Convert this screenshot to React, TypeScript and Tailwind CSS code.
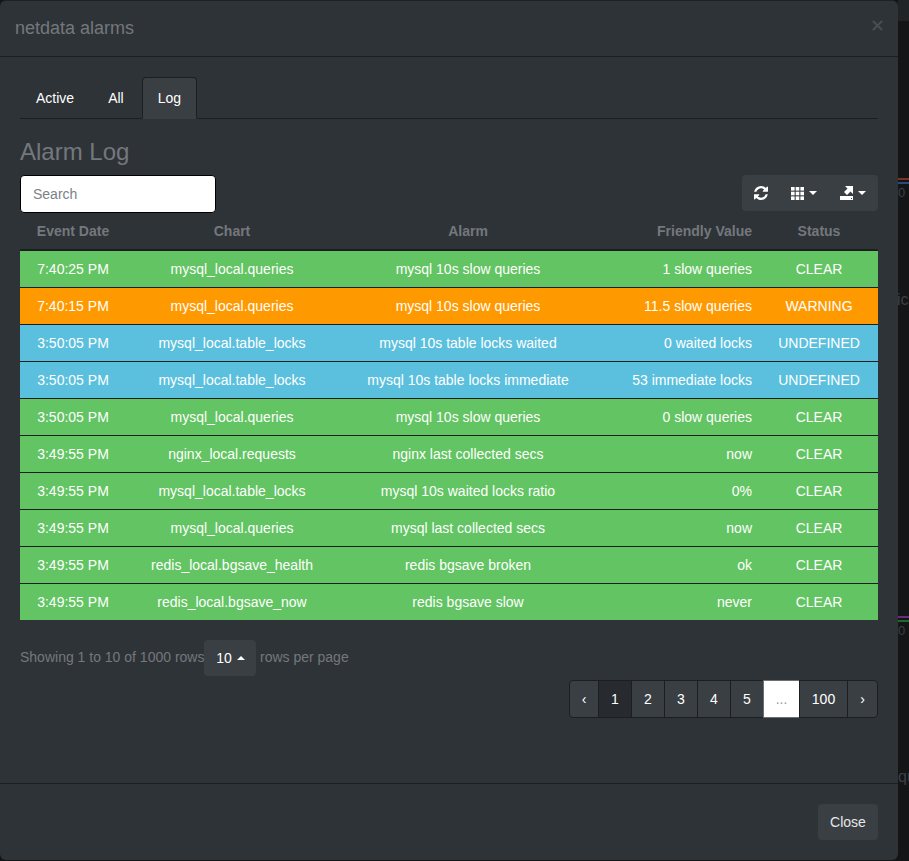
import React from 'react';

type Row = { date: string; chart: string; alarm: string; value: string; status: string };

const rows: Row[] = [
  { date: '7:40:25 PM', chart: 'mysql_local.queries', alarm: 'mysql 10s slow queries', value: '1 slow queries', status: 'CLEAR' },
  { date: '7:40:15 PM', chart: 'mysql_local.queries', alarm: 'mysql 10s slow queries', value: '11.5 slow queries', status: 'WARNING' },
  { date: '3:50:05 PM', chart: 'mysql_local.table_locks', alarm: 'mysql 10s table locks waited', value: '0 waited locks', status: 'UNDEFINED' },
  { date: '3:50:05 PM', chart: 'mysql_local.table_locks', alarm: 'mysql 10s table locks immediate', value: '53 immediate locks', status: 'UNDEFINED' },
  { date: '3:50:05 PM', chart: 'mysql_local.queries', alarm: 'mysql 10s slow queries', value: '0 slow queries', status: 'CLEAR' },
  { date: '3:49:55 PM', chart: 'nginx_local.requests', alarm: 'nginx last collected secs', value: 'now', status: 'CLEAR' },
  { date: '3:49:55 PM', chart: 'mysql_local.table_locks', alarm: 'mysql 10s waited locks ratio', value: '0%', status: 'CLEAR' },
  { date: '3:49:55 PM', chart: 'mysql_local.queries', alarm: 'mysql last collected secs', value: 'now', status: 'CLEAR' },
  { date: '3:49:55 PM', chart: 'redis_local.bgsave_health', alarm: 'redis bgsave broken', value: 'ok', status: 'CLEAR' },
  { date: '3:49:55 PM', chart: 'redis_local.bgsave_now', alarm: 'redis bgsave slow', value: 'never', status: 'CLEAR' },
];

const rowColor = (status: string) => {
  if (status === 'WARNING') return 'bg-[#ff9900]';
  if (status === 'UNDEFINED') return 'bg-[#5bc0de]';
  return 'bg-[#62c462]';
};

const Caret: React.FC<{ up?: boolean }> = ({ up }) => (
  <span
    className={`inline-block w-0 h-0 border-x-4 border-x-transparent ${up ? 'border-b-4 border-b-white' : 'border-t-4 border-t-white'}`}
  />
);

const RefreshIcon = () => (
  <svg width="14" height="14" viewBox="0 0 1536 1536" fill="white">
    <path d="M1511 928q0 5-1 7-64 268-268 434.500t-478 166.500q-146 0-282.500-55t-243.500-157l-129 129q-19 19-45 19t-45-19-19-45v-448q0-26 19-45t45-19h448q26 0 45 19t19 45-19 45l-137 137q71 66 161 102t187 36q134 0 250-65t186-179q11-17 53-117 8-23 30-23h192q13 0 22.500 9.500t9.500 22.500zM1536 128v448q0 26-19 45t-45 19h-448q-26 0-45-19t-19-45 19-45l138-138q-148-137-349-137-134 0-250 65t-186 179q-11 17-53 117-8 23-30 23h-199q-13 0-22.500-9.500t-9.500-22.500v-7q65-268 270-434.500t480-166.500q146 0 284 55.500t245 156.500l130-129q19-19 45-19t45 19 19 45z" />
  </svg>
);

const GridIcon = () => (
  <svg width="13" height="13" viewBox="0 0 13 13" fill="white">
    {[0, 4.7, 9.4].map((x) =>
      [0, 4.7, 9.4].map((y) => <rect key={`${x}-${y}`} x={x} y={y} width="3.6" height="3.6" />),
    )}
  </svg>
);

const ExportIcon = () => (
  <svg width="13" height="14" viewBox="0 0 13 14" fill="white">
    <rect x="0" y="10" width="13" height="4" />
    <path d="M5 0H13V8L10.500 5.500 7 9 4 6 7.500 2.500z" />
    <rect x="11" y="12" width="1" height="1" fill="#3a3f44" />
  </svg>
);

const PageItem: React.FC<{ label: string; className: string }> = ({ label, className }) => (
  <span className={`h-[38px] flex items-center justify-center border border-[#1c1e22] -ml-px first:ml-0 ${className}`}>
    {label}
  </span>
);

const cell = 'px-2 align-middle font-normal';

// bits of the dashboard behind the modal, visible in the strip to its right
const Backdrop = () => (
  <div className="absolute inset-y-0 right-0 w-[11px] overflow-hidden text-[#3d4044] text-[16px] leading-[20px]">
    <div className="absolute top-0 inset-x-0 h-[21px] bg-[#212427]" />
    <div className="absolute top-[178px] inset-x-0 h-[2px] bg-[#7a3320]" />
    <div className="absolute top-[182px] inset-x-0 h-[2px] bg-[#2d4a80]" />
    <span className="absolute top-[183px] left-0 text-[13px]">0</span>
    <span className="absolute top-[290px] -left-px">ic</span>
    <div className="absolute top-[616px] inset-x-0 h-[2px] bg-[#6a2a80]" />
    <div className="absolute top-[620px] inset-x-0 h-[2px] bg-[#1f6a2a]" />
    <span className="absolute top-[621px] left-0 text-[13px]">0</span>
    <span className="absolute top-[767px] left-0">qu</span>
  </div>
);

export default function App() {
  return (
    <div
      className="relative h-[861px] w-[909px] overflow-hidden bg-[#131517] text-white text-[14px] leading-[20px]"
      style={{ fontFamily: '"Liberation Sans", Arial, sans-serif' }}
    >
      <Backdrop />
      <div className="relative w-[898px] h-[860px] bg-[#2e3338] rounded-md border-t border-[#1f2225] flex flex-col">
        <div className="h-[56px] shrink-0 border-b border-[#1c1e22] px-[15px] flex items-center justify-between">
          <h4 className="text-[18px] text-[#74787c] pb-[2px]">netdata alarms</h4>
          <span className="text-[#4a4e52] -mt-[6px]">
            <svg width="11" height="11" viewBox="0 0 12 12" stroke="currentColor" strokeWidth="2.200" fill="none">
              <path d="M1 1l10 10M11 1L1 11" />
            </svg>
          </span>
        </div>

        <div className="flex-1 px-5 pt-5">
          <div className="h-[42px] flex border-b border-[#1c1e22]">
            <span className="px-4 mr-[2px] h-[41px] flex items-center">Active</span>
            <span className="px-4 mr-[2px] h-[41px] flex items-center">All</span>
            <span className="px-[15px] h-[42px] flex items-center bg-[#3a3f44] border border-[#1c1e22] border-b-transparent rounded-t">
              Log
            </span>
          </div>

          <h2 className="mt-[20px] text-[24px] leading-[26px] text-[#74787c]">Alarm Log</h2>

          <div className="mt-[10px] flex items-center justify-between">
            <div className="w-[196px] h-[38px] bg-white border border-black rounded flex items-center px-3 text-[#7a8288]">
              Search
            </div>
            <div className="h-[36px] mb-[2px] w-[136px] bg-[#3a3f44] rounded flex items-center pl-[12px]">
              <RefreshIcon />
              <span className="ml-[23px] flex items-center gap-[5px]">
                <GridIcon />
                <Caret />
              </span>
              <span className="ml-[23px] flex items-center gap-[5px]">
                <ExportIcon />
                <Caret />
              </span>
            </div>
          </div>

          <table className="w-[858px] table-fixed border-collapse">
            <colgroup>
              <col className="w-[106px]" />
              <col className="w-[212px]" />
              <col className="w-[260px]" />
              <col className="w-[162px]" />
              <col className="w-[118px]" />
            </colgroup>
            <thead>
              <tr className="h-[37px] border-b-2 border-[#1c1e22] text-[#74787c] text-[14px]">
                <th className="px-2 font-bold text-center">Event Date</th>
                <th className="px-2 font-bold text-center">Chart</th>
                <th className="px-2 font-bold text-center">Alarm</th>
                <th className="px-2 font-bold text-right">Friendly Value</th>
                <th className="px-2 font-bold text-center">Status</th>
              </tr>
            </thead>
            <tbody>
              {rows.map((r, i) => (
                <tr key={i} className={`h-[37px] border-b border-[#1c1e22] last:border-b-0 ${rowColor(r.status)}`}>
                  <td className={`${cell} text-center`}>{r.date}</td>
                  <td className={`${cell} text-center`}>{r.chart}</td>
                  <td className={`${cell} text-center`}>{r.alarm}</td>
                  <td className={`${cell} text-right`}>{r.value}</td>
                  <td className={`${cell} text-center`}>{r.status}</td>
                </tr>
              ))}
            </tbody>
          </table>

          <div className="mt-5 h-[36px] flex items-center text-[#74787c]">
            <span className="pb-[2px]">Showing 1 to 10 of 1000 rows</span>
            <span className="w-[52px] h-[36px] bg-[#3a3f44] rounded text-white flex items-center justify-center gap-[5px]">
              10
              <Caret up />
            </span>
            <span className="ml-[3.500px] pb-[2px]">rows per page</span>
          </div>

          <div className="mt-1 flex justify-end">
            <div className="flex">
              <PageItem label="‹" className="w-[30px] bg-[#3a3f44] rounded-l" />
              <PageItem label="1" className="w-[34px] bg-[#272b30]" />
              <PageItem label="2" className="w-[34px] bg-[#3a3f44]" />
              <PageItem label="3" className="w-[34px] bg-[#3a3f44]" />
              <PageItem label="4" className="w-[34px] bg-[#3a3f44]" />
              <PageItem label="5" className="w-[34px] bg-[#3a3f44]" />
              <PageItem label="..." className="w-[37px] bg-white text-[#999999] border-[#6a6f74]" />
              <PageItem label="100" className="w-[49px] bg-[#3a3f44]" />
              <PageItem label="›" className="w-[31px] bg-[#3a3f44] rounded-r" />
            </div>
          </div>
        </div>

        <div className="h-[77px] shrink-0 border-t border-[#1c1e22] flex items-center justify-end px-5">
          <span className="w-[60px] h-[36px] bg-[#3a3f44] rounded flex items-center justify-center text-[#e6e7e8]">
            Close
          </span>
        </div>
      </div>
    </div>
  );
}
